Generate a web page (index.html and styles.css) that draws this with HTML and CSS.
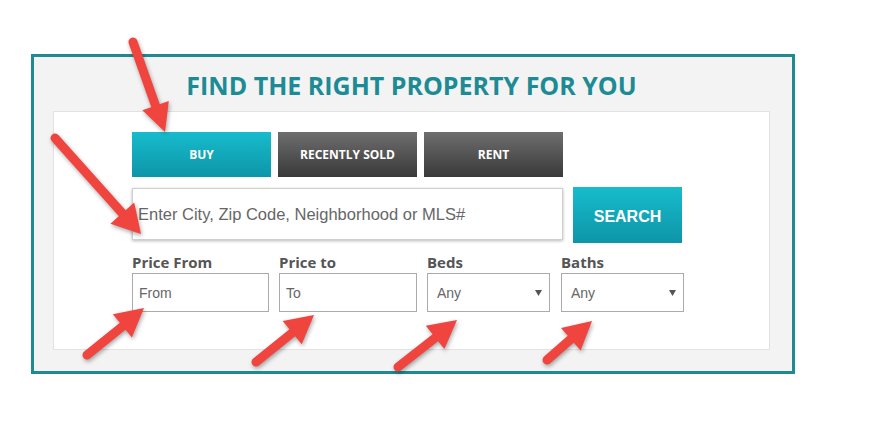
FILE: index.html
```html
<!DOCTYPE html>
<html lang="en">
<head>
<meta charset="utf-8">
<title>Find the right property for you</title>
<link rel="stylesheet" href="styles.css">
</head>
<body>
<div class="page">
  <section class="finder">
    <h1 class="finder-title">FIND THE RIGHT PROPERTY FOR YOU</h1>
    <div class="panel">
      <div class="tabs">
        <button class="tab tab-active">BUY</button>
        <button class="tab">RECENTLY SOLD</button>
        <button class="tab">RENT</button>
      </div>
      <div class="search-row">
        <input class="search-input" type="text" placeholder="Enter City, Zip Code, Neighborhood or MLS#">
        <button class="search-btn">SEARCH</button>
      </div>
      <div class="filters">
        <label class="field f-from">
          <span class="field-label">Price From</span>
          <input class="field-box" type="text" placeholder="From">
        </label>
        <label class="field f-to">
          <span class="field-label">Price to</span>
          <input class="field-box" type="text" placeholder="To">
        </label>
        <label class="field f-beds">
          <span class="field-label">Beds</span>
          <span class="select-wrap">
            <select class="field-box field-select"><option>Any</option></select>
            <svg class="caret" width="7" height="6" viewBox="0 0 7 6"><path d="M0 0H7L3.5 6Z" fill="#555"/></svg>
          </span>
        </label>
        <label class="field f-baths">
          <span class="field-label">Baths</span>
          <span class="select-wrap">
            <select class="field-box field-select"><option>Any</option></select>
            <svg class="caret" width="7" height="6" viewBox="0 0 7 6"><path d="M0 0H7L3.5 6Z" fill="#555"/></svg>
          </span>
        </label>
      </div>
    </div>
  </section>
  <svg class="arrows" width="876" height="434" viewBox="0 0 876 434">
    <g fill="#f0443f" stroke="#f0443f" stroke-linecap="round" stroke-width="9">
      <line x1="133" y1="42" x2="156" y2="107"/>
      <polygon stroke="none" points="165,132 142.4,110.3 168.8,100.9"/>
      <line x1="55" y1="138" x2="123" y2="214"/>
      <polygon stroke="none" points="141,234 110.4,223.8 134.2,202.4"/>
      <line x1="87" y1="355" x2="123" y2="326"/>
      <polygon stroke="none" points="144,308 131.9,337.4 112.9,314.2"/>
      <line x1="256" y1="362" x2="292" y2="333"/>
      <polygon stroke="none" points="314,315 301.7,344.3 282.7,320.9"/>
      <line x1="398" y1="367" x2="435" y2="338"/>
      <polygon stroke="none" points="457,320 444.4,349.1 425.8,325.7"/>
      <line x1="547" y1="360" x2="571" y2="339"/>
      <polygon stroke="none" points="592,321 580.6,350.6 561,328"/>
    </g>
  </svg>
</div>
</body>
</html>
```

FILE: styles.css
```css
* { box-sizing: border-box; }
html, body { margin: 0; padding: 0; background: #fff; }
body { font-family: "Open Sans", "Liberation Sans", sans-serif; }

.page {
  position: relative;
  width: 876px;
  height: 434px;
  padding: 54px 0 0 31px;
}

.finder {
  width: 764px;
  height: 320px;
  border: 3px solid #1f8a92;
  background: #f3f3f3;
  padding: 0 22px 0 19px;
}

.finder-title {
  margin: 0;
  height: 54px;
  line-height: 54px;
  padding-top: 1px;
  text-align: center;
  font-size: 25px;
  font-weight: 700;
  color: #1c8b95;
}

.panel {
  height: 239px;
  background: #fff;
  border: 1px solid #e2e2e2;
  padding: 20px 0 0 78px;
}

.tabs { display: flex; gap: 7px; }
.tab {
  width: 139px;
  height: 45px;
  border: 0;
  padding: 0;
  color: #fff;
  font-family: "Open Sans", "Liberation Sans", sans-serif;
  font-weight: 700;
  font-size: 12px;
  background: linear-gradient(#6e6e6e, #393939);
}
.tab-active { background: linear-gradient(#17bccc, #0d95a8); }

.search-row {
  display: flex;
  align-items: flex-start;
  gap: 10px;
  margin-top: 10px;
}
.search-input {
  margin-top: 1px;
  width: 431px;
  height: 52px;
  border: 1px solid #cfcfcf;
  box-shadow: 0 1px 3px rgba(0,0,0,0.28);
  padding: 0 5px;
  font-family: "Liberation Sans", Arial, sans-serif;
  font-size: 16.5px;
  color: #555;
  outline: none;
}
.search-input::placeholder { color: #666; }
.search-btn {
  width: 109px;
  height: 56px;
  border: 0;
  padding: 3px 0 0;
  color: #fff;
  font-family: "Liberation Sans", Arial, sans-serif;
  font-weight: 700;
  font-size: 16px;
  background: linear-gradient(#17bccc, #0d95a8);
}

.filters {
  display: flex;
  gap: 10px;
  margin-top: 10px;
}
.field { display: flex; flex-direction: column; }
.f-from { width: 137px; }
.f-to { width: 138px; }
.f-beds { width: 123px; }
.f-baths { width: 123px; margin-left: 1px; }

.field-label {
  font-weight: 700;
  font-size: 15px;
  line-height: 19px;
  color: #555;
  margin-bottom: 1px;
}
.field-box {
  width: 100%;
  height: 39px;
  border: 1px solid #ababab;
  padding: 0 6px;
  font-family: "Liberation Sans", Arial, sans-serif;
  font-size: 14px;
  color: #666;
  background: #fff;
  outline: none;
  border-radius: 0;
}
.field-box::placeholder { color: #666; }
.select-wrap { position: relative; display: block; }
.field-select {
  appearance: none;
  -webkit-appearance: none;
  padding: 0 9px;
}
.caret {
  position: absolute;
  right: 8px;
  top: 17px;
  pointer-events: none;
}

.arrows {
  position: absolute;
  left: 0;
  top: 0;
  pointer-events: none;
  filter: drop-shadow(1px 2px 2px rgba(0,0,0,0.35));
}
```
